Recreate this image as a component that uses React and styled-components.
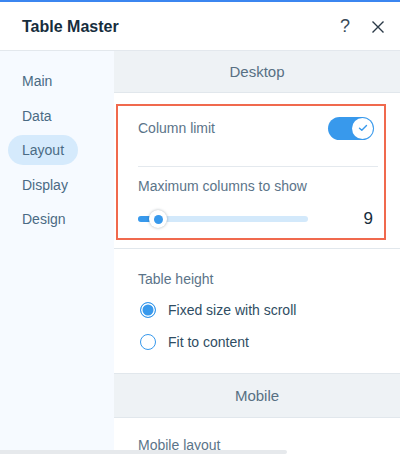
import React, { useState } from "react";
import styled, { createGlobalStyle } from "styled-components";

const GlobalStyle = createGlobalStyle`
	body {
		margin: 0;
		background: #ffffff;
		font-family: "Liberation Sans", Arial, sans-serif;
	}
`;

const Panel = styled.div`
	position: relative;
	width: 400px;
	height: 454px;
	overflow: hidden;
	display: flex;
	flex-direction: column;
	border-top: 2px solid #3b86f0;
	box-sizing: border-box;
	background: #ffffff;
`;

const Header = styled.div`
	height: 49px;
	flex-shrink: 0;
	display: flex;
	align-items: center;
	padding: 1px 7px 0 22px;
	box-sizing: border-box;
	border-bottom: 1px solid #e3e8ed;
`;

const Title = styled.div`
	flex: 1;
	font-size: 16px;
	font-weight: 700;
	color: #162d3d;
`;

const HeaderButton = styled.button`
	width: 30px;
	height: 30px;
	display: grid;
	place-items: center;
	margin-left: 3px;
	padding: 0;
	border: none;
	background: none;
	color: #3a4a58;
	font-family: "Liberation Sans", Arial, sans-serif;
	font-size: 18px;
`;

const Body = styled.div`
	flex: 1;
	display: flex;
	min-height: 0;
`;

const Sidebar = styled.nav`
	width: 114px;
	flex-shrink: 0;
	background: #f6faff;
	padding-top: 15px;
	display: flex;
	flex-direction: column;
	align-items: flex-start;
	gap: 4.5px;
`;

const NavItem = styled.div`
	height: 30px;
	line-height: 30px;
	margin-left: 8px;
	padding: 0 14px;
	border-radius: 15px;
	font-size: 14px;
	color: #4a6a84;
	background: ${props => (props.active ? "#d5eafc" : "transparent")};
`;

const Main = styled.div`
	flex: 1;
	display: flex;
	flex-direction: column;
`;

const SectionHeader = styled.div`
	flex-shrink: 0;
	height: ${props => props.height}px;
	display: flex;
	align-items: center;
	justify-content: center;
	background: #eef2f5;
	border-top: ${props => (props.topBorder ? "1px solid #e1e7ec" : "none")};
	border-bottom: 1px solid #e1e7ec;
	font-size: 15px;
	color: #577083;
`;

const DesktopBody = styled.div`
	padding: 11px 14px 8px 2px;
	border-bottom: 1px solid #e1e7ec;
`;

const Highlight = styled.div`
	border: 2px solid #f0694e;
	padding: 10px 6px 10px 20px;
`;

const Row = styled.div`
	display: flex;
	align-items: center;
	justify-content: space-between;
	height: ${props => props.height}px;
`;

const Label = styled.div`
	font-size: 14px;
	line-height: 17px;
	color: #5b7489;
`;

const Divider = styled.div`
	height: 1px;
	background: #e4e9ee;
	margin: 26px 0 11px;
`;

const Toggle = styled.div`
	width: 46px;
	height: 23px;
	margin-right: 4px;
	border-radius: 12px;
	background: #3899ec;
	display: flex;
	align-items: center;
	justify-content: flex-end;
	padding: 0 1px;
	box-sizing: border-box;
`;

const Knob = styled.div`
	width: 21px;
	height: 21px;
	border-radius: 50%;
	background: #ffffff;
	display: grid;
	place-items: center;
`;

const SliderRow = styled(Row)`
	margin-top: 15px;
`;

const Track = styled.div`
	position: relative;
	width: 170px;
	height: 6px;
	border-radius: 3px;
	background: #d3e9fb;
`;

const TrackFill = styled.div`
	height: 100%;
	border-radius: 3px;
	background: #3899ec;
`;

const Thumb = styled.div`
	position: absolute;
	top: 50%;
	width: 18px;
	height: 18px;
	margin: -9px 0 0 -9px;
	border-radius: 50%;
	background: #ffffff;
	box-shadow: 0 0 3px rgba(22, 45, 61, 0.35);
	display: grid;
	place-items: center;

	&::after {
		content: "";
		width: 9px;
		height: 9px;
		border-radius: 50%;
		background: #3899ec;
	}
`;

const Value = styled.div`
	font-size: 17px;
	color: #162d3d;
	margin-right: 5px;
`;

const HeightSection = styled.div`
	padding: 22px 20px 21px 24px;
`;

const RadioRow = styled.label`
	display: flex;
	align-items: center;
	height: 20px;
	margin-top: ${props => props.top}px;
	font-size: 14px;
	color: #2f4d63;
`;

const RadioDot = styled.span`
	width: 16px;
	height: 16px;
	box-sizing: border-box;
	margin: 0 12px 0 2px;
	border-radius: 50%;
	border: 1px solid #3899ec;
	background: ${props => (props.checked ? "#3899ec" : "#ffffff")};
	box-shadow: ${props => (props.checked ? "inset 0 0 0 1.5px #ffffff" : "none")};
`;

const MobileBody = styled.div`
	padding: 19px 24px 0;
`;

const Scrollbar = styled.div`
	position: absolute;
	left: 0;
	bottom: 0;
	width: 287px;
	height: 4px;
	border-radius: 0 2px 2px 0;
	background: #e6e9ec;
`;

const Check = () => (
	<svg width="10" height="8" viewBox="0 0 10 8" fill="none">
		<path d="M1.5 4.2 L3.8 6.3 L8.5 1.5" stroke="#3899ec" strokeWidth="1.4" strokeLinecap="round" strokeLinejoin="round" />
	</svg>
);

const Close = () => (
	<svg width="14" height="14" viewBox="0 0 14 14">
		<path d="M1.5 1.5 L12.5 12.5 M12.5 1.5 L1.5 12.5" stroke="#2b3a48" strokeWidth="1.4" />
	</svg>
);

const tabs = ["Main", "Data", "Layout", "Display", "Design"];

export default function App() {
	const [active, setActive] = useState("Layout");
	const [fixed, setFixed] = useState(true);
	const columns = 9;
	const fill = 20;

	return (
		<>
			<GlobalStyle />
			<Panel>
				<Header>
					<Title>Table Master</Title>
					<HeaderButton>?</HeaderButton>
					<HeaderButton>
						<Close />
					</HeaderButton>
				</Header>
				<Body>
					<Sidebar>
						{tabs.map(t => (
							<NavItem key={t} active={t === active} onClick={() => setActive(t)}>
								{t}
							</NavItem>
						))}
					</Sidebar>
					<Main>
						<SectionHeader height={41}>Desktop</SectionHeader>
						<DesktopBody>
							<Highlight>
								<Row height={24}>
									<Label>Column limit</Label>
									<Toggle>
										<Knob>
											<Check />
										</Knob>
									</Toggle>
								</Row>
								<Divider />
								<Label>Maximum columns to show</Label>
								<SliderRow height={18}>
									<Track>
										<TrackFill style={{ width: fill }} />
										<Thumb style={{ left: fill }} />
									</Track>
									<Value>{columns}</Value>
								</SliderRow>
							</Highlight>
						</DesktopBody>
						<HeightSection>
							<Label>Table height</Label>
							<RadioRow top={12} onClick={() => setFixed(true)}>
								<RadioDot checked={fixed} />
								Fixed size with scroll
							</RadioRow>
							<RadioRow top={12} onClick={() => setFixed(false)}>
								<RadioDot checked={!fixed} />
								Fit to content
							</RadioRow>
						</HeightSection>
						<SectionHeader height={43} topBorder>
							Mobile
						</SectionHeader>
						<MobileBody>
							<Label>Mobile layout</Label>
						</MobileBody>
					</Main>
				</Body>
				<Scrollbar />
			</Panel>
		</>
	);
}
